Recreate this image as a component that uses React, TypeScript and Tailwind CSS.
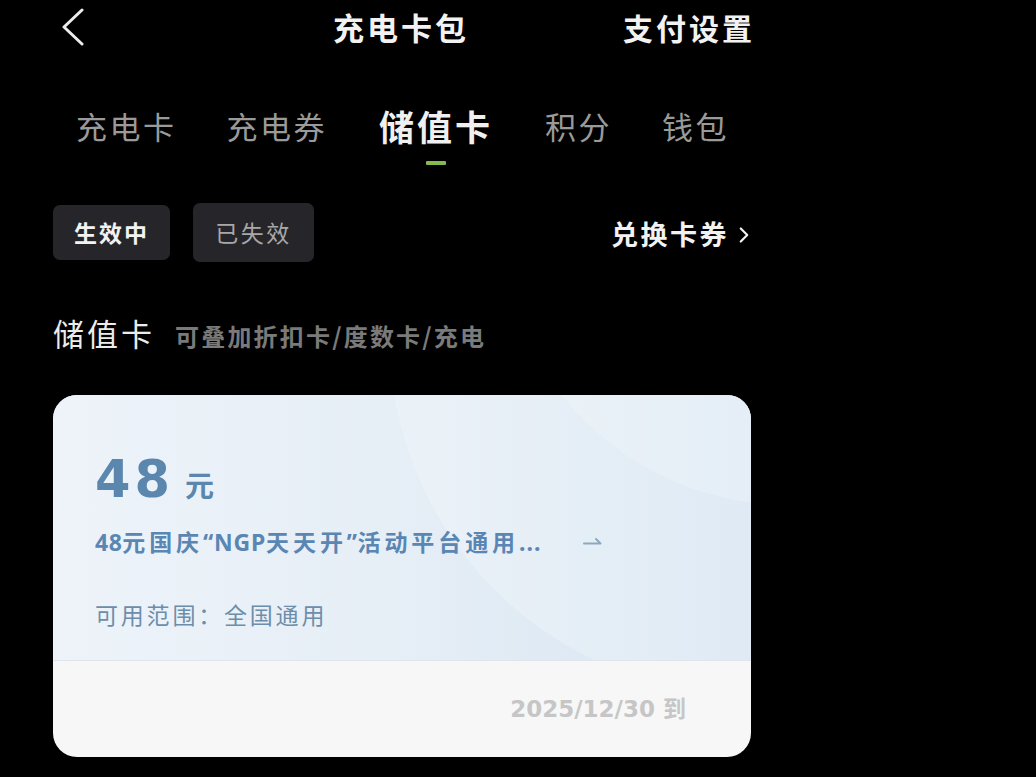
import { ChevronRight } from 'lucide-react';

const cjk = '"Noto Sans CJK SC", "Noto Sans", sans-serif';
const latin = '"Noto Sans", sans-serif';
const digits = '"DejaVu Sans", "Noto Sans CJK SC", sans-serif';

const tabs = ['充电卡', '充电券', '储值卡', '积分', '钱包'];

function BackIcon() {
  return (
    <svg width="24" height="38" viewBox="0 0 24 38" fill="none" className="text-[#ececec]">
      <path d="M21 2 3 19l18 17" stroke="currentColor" strokeWidth="3" strokeLinecap="round" strokeLinejoin="round" />
    </svg>
  );
}

function HalfArrow() {
  return (
    <svg width="20" height="10" viewBox="0 0 20 10" fill="none">
      <path d="M1 7.5h16.5L13 3" stroke="#8fa8bf" strokeWidth="2" strokeLinecap="round" strokeLinejoin="round" />
    </svg>
  );
}

export default function App() {
  return (
    <div className="w-[1036px] h-[777px] bg-black overflow-hidden" style={{ fontFamily: cjk }}>
      <div className="w-[698px] ml-[53px]">
        {/* header */}
        <div className="flex items-center h-[52px] pt-[2px]">
          <div className="ml-[8px]">
            <BackIcon />
          </div>
          <div className="ml-[248px] text-[31px] tracking-[3px] font-bold text-[#f2f2f2] leading-[44px]">充电卡包</div>
          <div className="ml-auto -mr-[4px] text-[30px] tracking-[3px] font-bold text-[#f2f2f2] leading-[44px]">支付设置</div>
        </div>

        {/* tabs */}
        <div className="flex items-center mt-[51px] h-[46px] pl-[23px] gap-[50px]">
          {tabs.map((t, i) => (
            <div
              key={t}
              className={
                i === 2
                  ? 'mx-[2px] text-[35px] tracking-[3px] font-bold text-[#f0f0f0] leading-[46px]'
                  : 'text-[31px] tracking-[2.5px] text-[#9a9a9a] leading-[44px]'
              }
            >
              {t}
            </div>
          ))}
        </div>
        <div className="h-[4px] w-[20px] bg-[#86b84e] ml-[373px] mt-[12px] rounded-[1px]" />

        {/* filters */}
        <div className="flex items-center mt-[38px]">
          <div className="w-[117px] h-[55px] rounded-[7px] bg-[#26262a] flex items-center justify-center text-[23px] tracking-[2px] font-bold text-[#f2f2f2]">
            生效中
          </div>
          <div className="w-[121px] h-[59px] ml-[23px] rounded-[7px] bg-[#26262a] flex items-center justify-center text-[23px] tracking-[2.5px] text-[#a8a8a8]">
            已失效
          </div>
          <div className="ml-auto flex items-center text-[27px] tracking-[2.5px] font-bold text-[#f2f2f2] mt-[4px]">
            兑换卡券
            <ChevronRight className="w-[26px] h-[26px] ml-[2px] -mr-[6px]" strokeWidth={2} />
          </div>
        </div>

        {/* section title */}
        <div className="flex items-baseline mt-[49px]">
          <span className="text-[31px] tracking-[3px] text-[#ececec] leading-[44px]">储值卡</span>
          <span className="ml-[20px] text-[24px] tracking-[2.2px] font-bold text-[#7a7a7a]">可叠加折扣卡/度数卡/充电</span>
        </div>

        {/* card */}
        <div className="mt-[40px] w-[698px] h-[362px] rounded-[24px] overflow-hidden bg-[#f7f7f7] flex flex-col">
          <div className="relative h-[266px] bg-gradient-to-r from-[#edf3f9] via-[#e6eef6] to-[#d6e5f2] border-b border-[#dfe5ea] overflow-hidden">
            <div className="absolute left-[336px] top-[-420px] w-[720px] h-[720px] rounded-full bg-[#ffffff] opacity-[0.22]" />
            <div className="absolute left-[446px] top-[-470px] w-[580px] h-[580px] rounded-full bg-[#ffffff] opacity-[0.2]" />
            <div className="relative pl-[42px] pt-[60px]">
              <div className="flex items-baseline text-[#5b86ad] font-bold">
                <span className="text-[51px] leading-[50px] tracking-[4px]" style={{ fontFamily: digits }}>48</span>
                <span className="ml-[11px] text-[29px] leading-[50px]">元</span>
              </div>
              <div className="flex items-center mt-[19px] h-[28px] text-[23px] tracking-[3.9px] font-bold text-[#5a86b3]">
                <span>
                  <span className="tracking-[0.5px]" style={{ fontFamily: latin }}>48</span>
                  元国庆
                  <span className="tracking-[0.8px]" style={{ fontFamily: latin }}>“NGP</span>
                  天天开
                  <span className="tracking-[0.5px]" style={{ fontFamily: latin }}>”</span>
                  活动平台通用
                  <span className="tracking-[1px]" style={{ fontFamily: latin }}>...</span>
                </span>
                <span className="ml-[42px] mt-[-2px]">
                  <HalfArrow />
                </span>
              </div>
              <div className="mt-[43px] text-[23px] leading-[30px] tracking-[2.8px] text-[#6c8eab]">可用范围：全国通用</div>
            </div>
          </div>
          <div className="flex-1 flex items-center justify-end pr-[65px]">
            <span className="text-[23px] font-bold text-[#c6c6c6]" style={{ fontFamily: digits }}>2025/12/30 到</span>
          </div>
        </div>
      </div>
    </div>
  );
}
